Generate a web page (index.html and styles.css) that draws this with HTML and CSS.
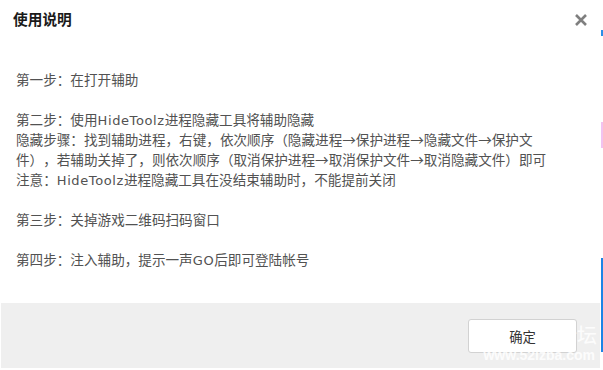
FILE: index.html
```html
<!DOCTYPE html>
<html lang="zh-CN">
<head>
<meta charset="utf-8">
<title>使用说明</title>
<link rel="stylesheet" href="styles.css">
</head>
<body>
<div class="screen">
  <div class="dialog">
    <header class="title-bar">
      <h1 class="title">使用说明</h1>
      <button class="close" aria-label="关闭">
        <svg width="12" height="12" viewBox="0 0 12 12"><path d="M1 1 L11 11 M11 1 L1 11" stroke="#7f7f7f" stroke-width="2.6" stroke-linecap="butt" fill="none"/></svg>
      </button>
    </header>
    <div class="content">
      <div class="line">第一步：在打开辅助</div>
      <div class="line blank"></div>
      <div class="line">第二步：使用<span class="en">HideToolz</span>进程隐藏工具将辅助隐藏</div>
      <div class="line">隐藏步骤：找到辅助进程，右键，依次顺序（隐藏进程→保护进程→隐藏文件→保护文</div>
      <div class="line">件），若辅助关掉了，则依次顺序（取消保护进程→取消保护文件→取消隐藏文件）即可</div>
      <div class="line">注意：<span class="en">HideToolz</span>进程隐藏工具在没结束辅助时，不能提前关闭</div>
      <div class="line blank"></div>
      <div class="line">第三步：关掉游戏二维码扫码窗口</div>
      <div class="line blank"></div>
      <div class="line">第四步：注入辅助，提示一声<span class="en">GO</span>后即可登陆帐号</div>
    </div>
    <footer class="footer">
      <button class="ok">确定</button>
      <div class="watermark">
        <span class="wm-big">论坛</span>
        <span class="wm-url">www.52lzba.com</span>
      </div>
    </footer>
  </div>
  <div class="edge"></div>
</div>
</body>
</html>
```
FILE: styles.css
```css
html, body {
  margin: 0;
  padding: 0;
  background: #ffffff;
}
.screen {
  display: flex;
  width: 603px;
  height: 370px;
  overflow: hidden;
}
.dialog {
  width: 601px;
  height: 370px;
  display: flex;
  flex-direction: column;
  background: #ffffff;
  font-family: "Noto Sans CJK SC", sans-serif;
}
.title-bar {
  height: 38px;
  display: flex;
  align-items: center;
  justify-content: space-between;
  padding: 0 14px 0 13px;
  flex: none;
}
.title {
  margin: 0;
  font-family: "Noto Sans CJK SC", sans-serif;
  font-size: 14.7px;
  font-weight: 700;
  color: #1a1a1a;
  line-height: 20px;
}
.close {
  border: 0;
  background: none;
  padding: 0;
  width: 12px;
  height: 12px;
  display: flex;
  margin-top: 2px;
}
.content {
  flex: 1;
  padding: 31px 16px 0;
  font-size: 13.6px;
  color: #525252;
  text-spacing-trim: space-all;
  font-feature-settings: "chws" 0, "halt" 0;
}
.line {
  line-height: 20px;
  height: 20px;
  white-space: nowrap;
}
.en {
  font-family: "DejaVu Sans", sans-serif;
  font-size: 13px;
  letter-spacing: 0.6px;
}
.footer {
  position: relative;
  flex: none;
  height: 65px;
  margin: 0 1px 2px;
  background: #efefef;
  display: flex;
  align-items: center;
  justify-content: flex-end;
  padding-right: 23px;
}
.ok {
  width: 109px;
  height: 34px;
  background: #ffffff;
  border: 1px solid #d2d2d2;
  border-radius: 3px;
  font-family: "Noto Sans CJK SC", sans-serif;
  font-size: 13.33px;
  color: #333333;
  padding: 0;
  margin-top: 1px;
}
.watermark {
  position: absolute;
  right: 3px;
  top: 20px;
  display: flex;
  flex-direction: column;
  align-items: flex-end;
  color: rgba(255, 255, 255, 0.85);
  pointer-events: none;
}
.wm-big {
  font-family: "Noto Sans CJK SC", sans-serif;
  font-size: 20px;
  line-height: 24px;
}
.wm-url {
  font-family: "Liberation Sans", sans-serif;
  font-weight: 700;
  font-size: 14px;
  line-height: 16px;
  margin-right: 2px;
}
.edge {
  width: 2px;
  height: 370px;
  flex: none;
  background: linear-gradient(to bottom,
    #ffffff 0, #ffffff 30px, #2a8ee8 30px, #2a8ee8 36px, #ffffff 36px,
    #ffffff 122px, #f2c2f0 122px, #f2c2f0 148px, #ffffff 148px,
    #ffffff 258px, #1d84e6 258px, #1d84e6 352px, #ffffff 352px);
}
```
